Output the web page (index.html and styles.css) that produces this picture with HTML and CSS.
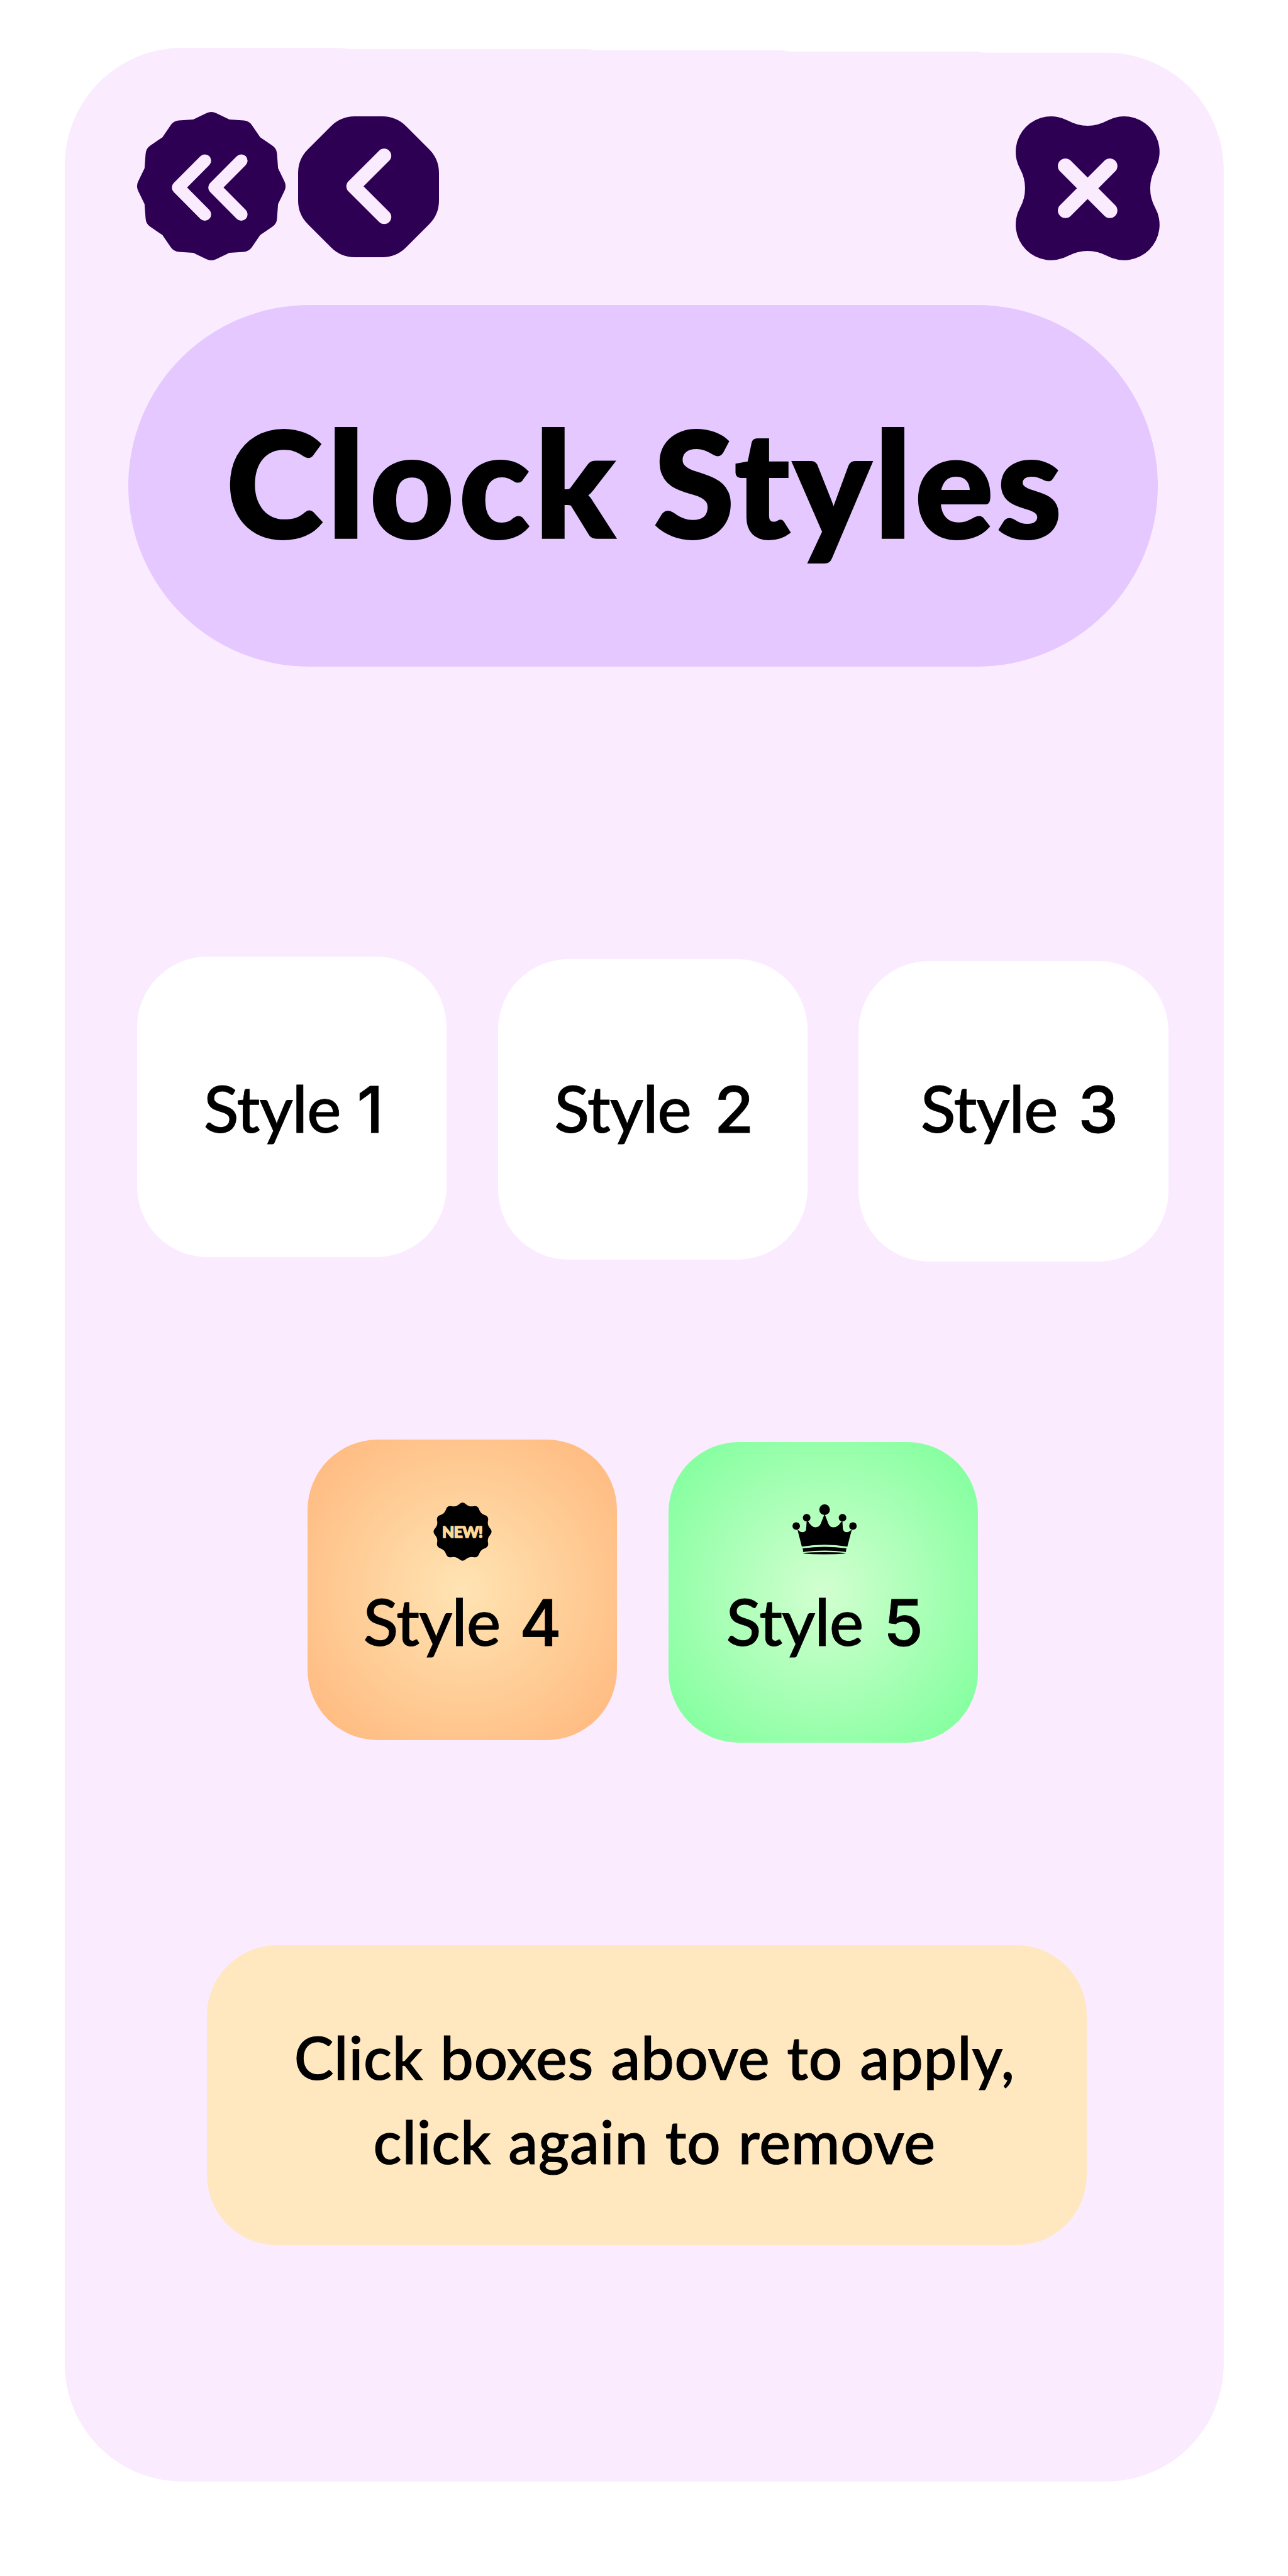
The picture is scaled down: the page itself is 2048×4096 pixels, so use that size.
FILE: index.html
```
<!DOCTYPE html>
<html lang="en">
<head>
<meta charset="utf-8">
<title>Clock Styles</title>
<link rel="stylesheet" href="styles.css">
</head>
<body>
<main class="panel">
  <svg class="panel-shape" viewBox="102.7 75.9 1842.8 3869.7" aria-hidden="true">
    <path d="M102.7 263A187 187 0 0 1 289.7 75.9H526Q542 76 555 78H928Q938 78 947 79.9H1238Q1247 80 1256 81.8H1550Q1556 82 1563 83.7H1758.5A187 187 0 0 1 1945.5 270.7V3758.6A187 187 0 0 1 1758.5 3945.6H289.7A187 187 0 0 1 102.7 3758.6Z"/>
  </svg>

  <header class="toolbar">
    <button class="tool tool-first" aria-label="First">
      <svg viewBox="-118 -118 236 236">
        <path class="scallop" d="M0-101 24-89.4 50.5-87.5 65.5-65.5 87.5-50.5 89.4-24 101 0 89.4 24 87.5 50.5 65.5 65.5 50.5 87.5 24 89.4 0 101-24 89.4-50.5 87.5-65.5 65.5-87.5 50.5-89.4 24-101 0-89.4-24-87.5-50.5-65.5-65.5-50.5-87.5-24-89.4Z"/>
        <path class="mark" stroke-width="20.1" d="M-10.3-40.5-52.7 2.2-10.3 44.9M47.6-40.5 5.2 2.2 47.6 44.9"/>
      </svg>
    </button>
    <button class="tool tool-back" aria-label="Back">
      <svg viewBox="-112 -112 224 224">
        <path class="plate" d="M-22-112H22A53 53 0 0 1 59.5-96.5L96.5-59.5A53 53 0 0 1 112-22V22A53 53 0 0 1 96.5 59.5L59.5 96.5A53 53 0 0 1 22 112H-22A53 53 0 0 1-59.5 96.5L-96.5 59.5A53 53 0 0 1-112 22V-22A53 53 0 0 1-96.5-59.5L-59.5-96.5A53 53 0 0 1-22-112Z"/>
        <path class="mark" stroke-width="22.6" d="M24.9-49.4-24-.7 24.9 48"/>
      </svg>
    </button>
    <button class="tool tool-close" aria-label="Close">
      <svg viewBox="-114.4 -114.4 228.8 228.8">
        <path class="plate" d="M-30.8-107.4A63.9 63.9 0 0 0 30.8-107.4A56.4 56.4 0 0 1 107.4-30.8A63.9 63.9 0 0 0 107.4 30.8A56.4 56.4 0 0 1 30.8 107.4A63.9 63.9 0 0 0-30.8 107.4A56.4 56.4 0 0 1-107.4 30.8A63.9 63.9 0 0 0-107.4-30.8A56.4 56.4 0 0 1-30.8-107.4Z"/>
        <path class="mark" stroke-width="24.1" d="M-35.3-35.3 35.3 35.3M35.3-35.3-35.3 35.3"/>
      </svg>
    </button>
  </header>

  <h1 class="title"><span class="title-a">Clock </span><span class="title-b">Styles</span></h1>

  <section class="row row-basic">
    <button class="card card-1"><span class="label"><span>Style</span><span class="num">1</span></span></button>
    <button class="card card-2"><span class="label"><span>Style</span><span class="num">2</span></span></button>
    <button class="card card-3"><span class="label"><span>Style</span><span class="num">3</span></span></button>
  </section>

  <section class="row row-special">
    <button class="card card-4">
      <svg class="badge" viewBox="-48.5 -48.5 97 97">
        <path d="M-5.2-43.8Q0-48.5 5.2-43.8Q10.5-39 17.4-40.5Q24.2-42 26.4-35.3Q28.6-28.6 35.3-26.4Q42-24.2 40.5-17.4Q39-10.5 43.8-5.2Q48.5 0 43.8 5.2Q39 10.5 40.5 17.4Q42 24.2 35.3 26.4Q28.6 28.6 26.4 35.3Q24.2 42 17.4 40.5Q10.5 39 5.2 43.8Q0 48.5-5.2 43.8Q-10.5 39-17.4 40.5Q-24.2 42-26.4 35.3Q-28.6 28.6-35.3 26.4Q-42 24.2-40.5 17.4Q-39 10.5-43.8 5.2Q-48.5 0-43.8-5.2Q-39-10.5-40.5-17.4Q-42-24.2-35.3-26.4Q-28.6-28.6-26.4-35.3Q-24.2-42-17.4-40.5Q-10.5-39-5.2-43.8Z"/>
        <text x="-32.5" y="9.2" textLength="65" lengthAdjust="spacing">NEW!</text>
      </svg>
      <span class="label"><span>Style</span><span class="num">4</span></span>
    </button>
    <button class="card card-5">
      <svg class="crown" viewBox="50 36 506 394">
        <circle cx="80" cy="207" r="29.5"/><circle cx="162" cy="141" r="30"/><circle cx="303" cy="78" r="41.5"/><circle cx="444" cy="141" r="30"/><circle cx="526" cy="207" r="29.5"/>
        <path d="M89 231Q108 255 128 255Q155 253 158 232L162 168 175 172Q202 217 231 217Q262 215 273 188L301 116H305L333 188Q344 217 375 217Q408 215 430 178L443 166 447 230Q452 255 478 255Q498 253 518 231L482 369Q392 354 303 354Q214 354 124 369Z"/>
        <path d="M129 382Q303 357 476 382Q470 390 471 410Q303 388 134 410Q136 392 129 382Z"/>
        <path d="M132 421Q160 412 302 412Q444 412 471 421Q444 429 302 429Q160 429 132 421Z"/>
      </svg>
      <span class="label"><span>Style</span><span class="num">5</span></span>
    </button>
  </section>

  <p class="note">Click boxes above to apply,<br>click again to remove</p>
</main>
</body>
</html>
```
FILE: styles.css
```
* { box-sizing: border-box; }

html, body { margin: 0; }

body {
  width: 2048px;
  height: 4096px;
  overflow: hidden;
  background: #fff;
  color: #000;
  font-family: Lato, "Open Sans", sans-serif;
  font-weight: 500;
}

button {
  padding: 0;
  border: 0;
  background: none;
  color: inherit;
  font: inherit;
}

svg { display: block; overflow: visible; }

.panel {
  position: relative;
  isolation: isolate;
  width: 1842.8px;
  height: 3869.7px;
  margin: 75.9px 0 0 102.7px;
  padding-top: 102.4px;
}

.panel-shape {
  position: absolute;
  inset: 0;
  z-index: -1;
  width: 100%;
  height: 100%;
  fill: #faebff;
}

/* Toolbar */
.toolbar {
  display: flex;
  align-items: flex-start;
  height: 236px;
  padding: 0 102.2px 0 115.1px;
}

.tool-first { width: 236px; }
.tool-back { width: 224px; margin: 7.2px 0 0 20.1px; }
.tool-close { width: 228.8px; margin: 6.3px 0 0 auto; }

.plate { fill: #2d0054; }

.scallop {
  fill: #2d0054;
  stroke: #2d0054;
  stroke-width: 34;
  stroke-linejoin: round;
}

.mark {
  fill: none;
  stroke: #faebff;
  stroke-linecap: round;
  stroke-linejoin: round;
}

/* Title */
.title {
  width: 1637.3px;
  height: 575.3px;
  margin: 70.6px 0 0 101px;
  padding: 166.8px 0 0 156px;
  border-radius: 288px;
  background: #e4c8ff;
  font-size: 232px;
  font-weight: 900;
  line-height: 226px;
  white-space: nowrap;
  -webkit-text-stroke: 4px #000;
}

.title-a { letter-spacing: 8.2px; word-spacing: -9px; }
.title-b { letter-spacing: 5.7px; }

/* Style cards */
.row {
  display: flex;
  align-items: flex-start;
  gap: 81.2px;
}

.row-basic { height: 484.9px; margin: 461.3px 0 0 115.4px; }
.row-special { height: 481.5px; margin: 282.9px 0 0 386.3px; }

.card {
  display: flex;
  flex-direction: column;
  align-items: center;
  width: 492.4px;
  height: 477.8px;
  border-radius: 112px;
  background: #fff;
}

.label {
  display: flex;
  align-items: baseline;
  gap: 33px;
  font-size: 103px;
  line-height: 100px;
  letter-spacing: -1.2px;
  -webkit-text-stroke: 0.8px #000;
}

.num {
  font-family: Inter, "Liberation Sans", sans-serif;
  font-size: 102px;
  font-weight: 450;
  letter-spacing: 0;
}

.card-1 { padding: 189.5px 0 0 5px; }
.card-1 .label { gap: 26px; }
.card-2 { margin-top: 3.5px; padding: 186px 0 0 4px; }
.card-2 .label { gap: 37px; }
.card-3 { margin-top: 7px; padding: 182.5px 0 0 19px; }

.card-4 {
  padding-top: 98px;
  background: radial-gradient(circle 300px, #ffe4b3, #ffbc82);
}

.card-4 .label { gap: 31px; }

.card-5 {
  margin-top: 3.7px;
  padding-top: 98.9px;
  background: radial-gradient(circle 300px, #d2ffd0, #86ffa0);
}

.card-5 .label { margin-left: 5px; }

.badge { width: 97px; height: 97px; margin-bottom: 42.3px; }

.badge text {
  fill: #ffd796;
  stroke: #ffd796;
  stroke-width: 1.4;
  stroke-linejoin: round;
  font-family: Lato, "Open Sans", sans-serif;
  font-size: 25px;
  font-weight: 900;
}

.crown { width: 102.3px; height: 79.7px; margin: 0 0 55.1px 5px; }

/* Hint */
.note {
  width: 1398.8px;
  height: 477.6px;
  margin: 322.1px 0 0 226.7px;
  padding: 111px 0 0 24px;
  border-radius: 112px;
  background: #ffe7bf;
  font-size: 94px;
  line-height: 133.7px;
  letter-spacing: 0.8px;
  word-spacing: 2.5px;
  text-align: center;
  -webkit-text-stroke: 1.2px #000;
}
```
